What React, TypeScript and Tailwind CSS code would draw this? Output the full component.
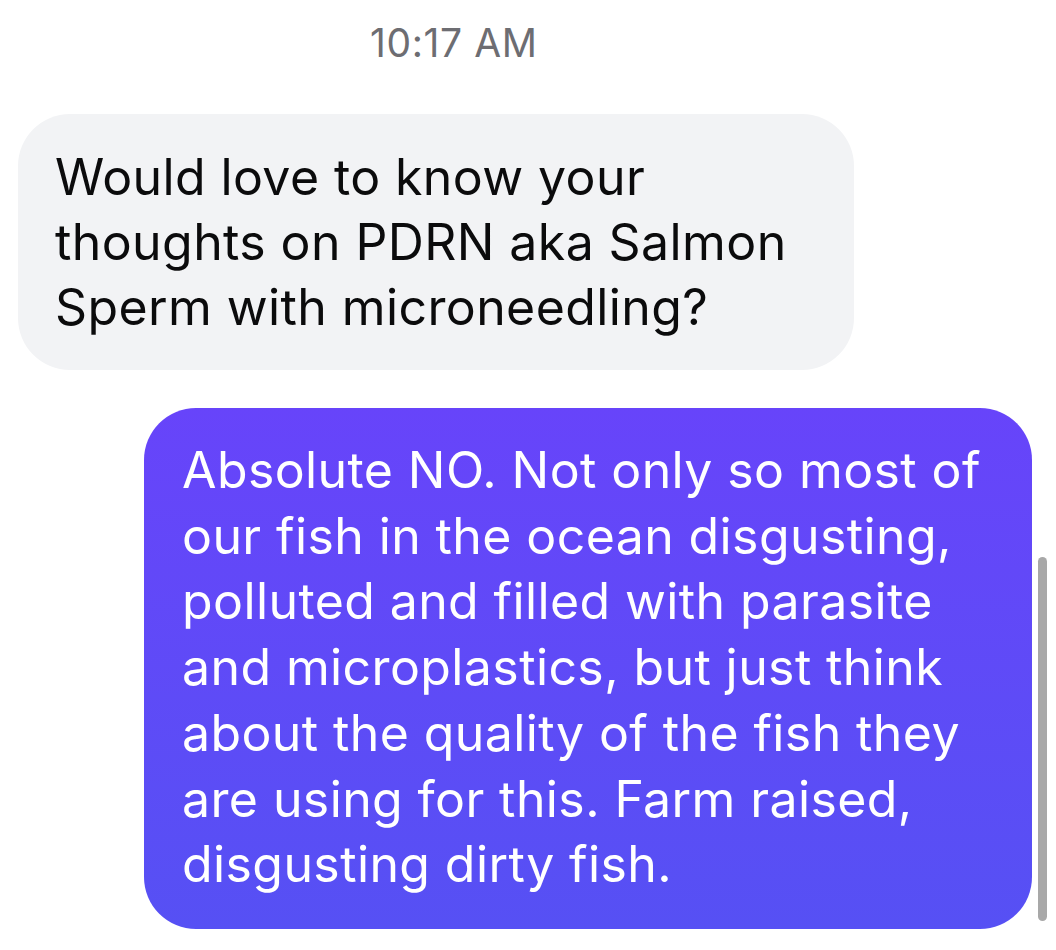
import React from "react";

export default function App() {
  const grayLines = [
    "Would love to know your",
    "thoughts on PDRN aka Salmon",
    "Sperm with microneedling?",
  ];
  const purpleLines = [
    "Absolute NO. Not only so most of",
    "our fish in the ocean disgusting,",
    "polluted and filled with parasite",
    "and microplastics, but just think",
    "about the quality of the fish they",
    "are using for this. Farm raised,",
    "disgusting dirty fish.",
  ];
  return (
    <div className="relative w-[1056px] h-[950px] overflow-hidden bg-white font-['Inter',sans-serif]">
      <div className="pt-[20px] pl-[370px] text-[39px] leading-[46px] text-[#6d6d72] tracking-[0.6px]">
        10:17 AM
      </div>
      <div className="mt-[48px] ml-[18px] w-[836px] h-[256px] rounded-[52px] bg-[#f2f3f5] px-[37px] pt-[31px] text-[50px] leading-[65px] text-[#0b0b0c] tracking-[0.4px]">
        {grayLines.map((l) => (
          <div key={l} className="whitespace-nowrap">{l}</div>
        ))}
      </div>
      <div className="mt-[38px] ml-[144px] w-[888px] h-[521px] rounded-[52px] bg-gradient-to-b from-[#6744fa] to-[#5650f4] px-[38px] pt-[30px] text-[50px] leading-[65.7px] text-white tracking-[0.4px]">
        {purpleLines.map((l) => (
          <div key={l} className="whitespace-nowrap">{l}</div>
        ))}
      </div>
      <div className="absolute left-[1038px] top-[557px] w-[9px] h-[364px] rounded-full bg-[#a8a8a8]" />
    </div>
  );
}
